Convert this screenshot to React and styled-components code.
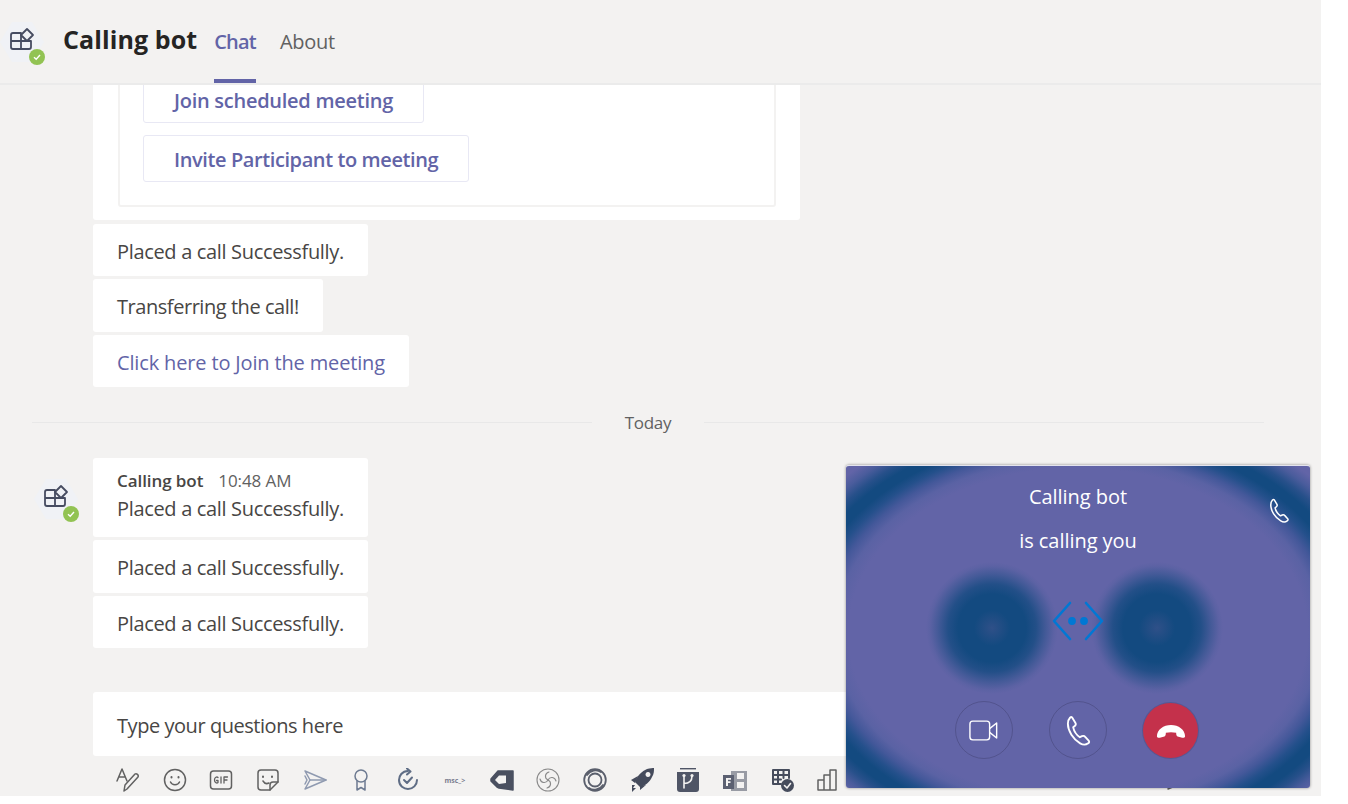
import React from 'react'
import styled, { createGlobalStyle } from 'styled-components'

const PURPLE = '#6264a7'
const TEXT = '#484644'
const FONT = '"Open Sans", "Noto Sans", sans-serif'
const SPOT = (x) => `radial-gradient(circle 66px at ${x}px 162px,
  rgba(47, 80, 136, 1) 0,
  rgba(19, 74, 128, 1) 18px,
  rgba(19, 74, 128, 1) 34px,
  rgba(19, 74, 128, 0.8) 44px,
  rgba(19, 74, 128, 0.38) 54px,
  rgba(19, 74, 128, 0.08) 62px,
  rgba(19, 74, 128, 0) 66px)`

const GlobalStyle = createGlobalStyle`
  html, body {
    margin: 0;
    padding: 0;
    background: #fff;
    font-family: ${FONT};
    overflow: hidden;
  }
`

const Page = styled.div`
  position: relative;
  width: 1321px;
  height: 796px;
  background: #f3f2f1;
  display: flex;
  flex-direction: column;
  overflow: hidden;
`

const Header = styled.header`
  flex: none;
  height: 83px;
  display: flex;
  align-items: stretch;
  border-bottom: 2px solid #ebebeb;
  box-sizing: content-box;
`

const HeaderAvatarSlot = styled.div`
  width: 63px;
  display: flex;
  align-items: center;
  box-sizing: border-box;
`

const Title = styled.h1`
  margin: 0 17px 0 0;
  font-size: 25px;
  font-weight: 700;
  letter-spacing: 0.1px;
  color: #252423;
  align-self: center;
  padding-bottom: 6px;
`

const Tab = styled.div`
  display: flex;
  align-items: center;
  margin-right: 24px;
  padding-top: 4px;
  font-size: 20px;
  letter-spacing: ${({ $active }) => ($active ? -0.8 : -0.3)}px;
  font-weight: ${({ $active }) => ($active ? 600 : 400)};
  color: ${({ $active }) => ($active ? PURPLE : '#616161')};
  border-bottom: 4px solid ${({ $active }) => ($active ? PURPLE : 'transparent')};
`

const AvatarRoot = styled.div`
  position: relative;
  width: 44px;
  height: 44px;
  flex: none;
`

const Badge = styled.div`
  position: absolute;
  right: -1px;
  bottom: -1px;
  width: 16px;
  height: 16px;
  border-radius: 50%;
  background: #92c353;
  display: flex;
  align-items: center;
  justify-content: center;
`

const Thread = styled.main`
  flex: 1;
  min-height: 0;
  display: flex;
  flex-direction: column;
  justify-content: flex-end;
  padding: 0 0 44px 93px;
  overflow: hidden;
`

const Bubble = styled.div`
  flex: none;
  align-self: flex-start;
  box-sizing: border-box;
  background: #fff;
  border-radius: 3px;
  padding: 14.25px 24px 10.25px;
  font-size: 20px;
  line-height: 28px;
  letter-spacing: ${({ $spacing }) => $spacing ?? -0.33}px;
  color: ${({ $link }) => ($link ? PURPLE : TEXT)};
  margin-top: ${({ $gap }) => $gap ?? 3}px;
`

const FirstBubble = styled(Bubble)`
  padding: 12px 24px 14px;
`

const CardBubble = styled(Bubble)`
  width: 707px;
  padding: 0 24px 13px 25px;
  margin-top: 0;
`

const InnerCard = styled.div`
  border: 2px solid #f3f2f1;
  border-radius: 3px;
  padding: 0 23px 23px;
  display: flex;
  flex-direction: column;
  align-items: flex-start;
  gap: 12px;
`

const ActionButton = styled.div`
  box-sizing: border-box;
  height: 47px;
  padding: 2px 30px 0;
  border: 1px solid #e8e8f4;
  border-radius: 3px;
  display: flex;
  align-items: center;
  font-size: 20px;
  font-weight: 600;
  letter-spacing: ${({ $spacing }) => $spacing}px;
  color: ${PURPLE};
`

const DateDivider = styled.div`
  flex: none;
  display: flex;
  align-items: center;
  gap: 33px;
  margin: 24px 57px 25px -61px;
  height: 22px;
  font-size: 17px;
  letter-spacing: -0.3px;
  color: #616161;
  &::before, &::after {
    content: '';
    flex: 1;
    height: 1px;
    background: #e8e8e8;
  }
`

const MessageRow = styled.div`
  flex: none;
  position: relative;
  display: flex;
  flex-direction: column;
`

const MessageAvatar = styled.div`
  position: absolute;
  left: -59px;
  top: 19px;
`

const Meta = styled.div`
  display: flex;
  gap: 15px;
  font-size: 17px;
  line-height: 22px;
  letter-spacing: -0.08px;
  color: #616161;
  margin-bottom: 3px;
`

const Author = styled.span`
  font-weight: 600;
  color: ${TEXT};
`

const Compose = styled.div`
  flex: none;
  height: 64px;
  margin: 0 56px 0 93px;
  background: #fff;
  border-radius: 3px;
  padding: 3px 24px 0;
  box-sizing: border-box;
  display: flex;
  align-items: center;
  font-size: 20px;
  letter-spacing: -0.45px;
  color: ${TEXT};
`

const Toolbar = styled.div`
  flex: none;
  height: 40px;
  margin: 0 56px 0 116px;
  display: flex;
  align-items: center;
  gap: 22.7px;
  padding-top: 8px;
  box-sizing: border-box;
  color: #616161;
`

const ToolIcon = styled.svg`
  width: 24px;
  height: 24px;
  flex: none;
  fill: none;
  stroke: currentColor;
  stroke-width: 1.5;
  stroke-linecap: round;
  stroke-linejoin: round;
`

const MscLabel = styled.span`
  width: 24px;
  flex: none;
  text-align: center;
  font-size: 7px;
  font-weight: 700;
  color: #7b7d90;
`

const SendSlot = styled.div`
  margin-left: auto;
  margin-right: 75px;
  line-height: 0;
`

const CallPopup = styled.aside`
  position: absolute;
  left: 846px;
  top: 465px;
  width: 464px;
  height: 323px;
  box-sizing: border-box;
  border-top: 1px solid #e4e4ee;
  border-radius: 3px;
  box-shadow: 0 0 3px rgba(0, 0, 0, 0.45);
  overflow: hidden;
  display: flex;
  flex-direction: column;
  align-items: center;
  color: #fff;
  background:
    ${SPOT(146)},
    ${SPOT(311)},
    radial-gradient(ellipse farthest-corner at 50% 52%,
      ${PURPLE} 70%, #5a62a4 74%, #44589a 77.5%, #24508b 81%, #134a80 84%,
      #134a80 87%, #27508a 90%, #4a5c9c 93.5%, ${PURPLE} 97%);
`

const CallText = styled.div`
  font-size: 20px;
  line-height: 28px;
  letter-spacing: -0.05px;
  margin-top: ${({ $top }) => $top}px;
`

const CornerPhone = styled.div`
  position: absolute;
  right: 18px;
  top: 31px;
  line-height: 0;
`

const BotMark = styled.div`
  margin-top: 46px;
  height: 40px;
  line-height: 0;
`

const CallActions = styled.div`
  margin: 60px 0 0 -3px;
  display: flex;
  align-items: center;
  gap: 36px;
`

const RoundButton = styled.div`
  width: 58px;
  height: 58px;
  box-sizing: border-box;
  border-radius: 50%;
  border: 1px solid rgba(70, 70, 120, 0.55);
  display: flex;
  align-items: center;
  justify-content: center;
`

const HangupButton = styled(RoundButton)`
  background: #c4314b;
  border: 0;
  width: 55px;
  height: 55px;
  box-shadow: 0 0 0 1px rgba(70, 70, 120, 0.4);
`

const PHONE_PATH = 'M7.5 2.5 L10 6.5 C10.6 7.5 10.3 8.4 9.6 9 L8.4 10 C9 12.8 11 15.8 13.4 17.4 L15 16.6 C15.9 16.2 16.8 16.4 17.4 17.2 L20 20 C20.6 20.8 20.4 21.6 19.6 22 C18 23.2 15.6 23.2 13.6 22 C8.4 19 4.4 12.6 4.4 7.4 C4.4 5.4 5 3.8 6 2.8 C6.5 2.3 7.1 2.1 7.5 2.5Z'

const Phone = ({ size }) => (
  <svg width={size} height={size} viewBox="0 0 24 24" fill="none" stroke="#fff" strokeWidth="1.4" strokeLinejoin="round">
    <path d={PHONE_PATH} />
  </svg>
)

const Avatar = () => (
  <AvatarRoot>
    <svg width="44" height="44" viewBox="0 0 44 44">
      <path d="M12 2 H32 L44 22 L32 42 H12 L0 22Z" fill="#f0f2f6" />
      <g fill="none" stroke="#464c61" strokeWidth="1.8" strokeLinejoin="round">
        <path d="M11 21 V15 a2 2 0 0 1 2 -2 H21 V29 H13 a2 2 0 0 1 -2 -2 V21 H31 V27 a2 2 0 0 1 -2 2 H21" />
        <path d="M21 15 L27 9 L33 15 L27 21Z" fill="#f0f2f6" />
      </g>
    </svg>
    <Badge>
      <svg width="8" height="8" viewBox="0 0 8 8" fill="none" stroke="#fff" strokeWidth="1.4">
        <path d="M1 4.2 L3.2 6.2 L7 2" />
      </svg>
    </Badge>
  </AvatarRoot>
)

const TOOLS = [
  <><path d="M1 13 L6 1 L11 13 M3 9 H9" /><path d="M8 23 L9 17 L19 6 C20.5 5 23 7 22 9 L11 21Z" /></>,
  <><circle cx="12" cy="12" r="10.5" /><path d="M7.5 14 C9 17.5 15 17.5 16.5 14" /><path d="M8.5 9 V9.5 M15.5 9 V9.5" strokeWidth="2" /></>,
  <><rect x="1.5" y="3" width="21" height="18" rx="3" /><path d="M9 9.5 C8 8.5 5.5 9 5.5 12 C5.5 15 8 15.5 9 14.5 V12.5 H7.5 M12 9 V15 M15 15 V9 H18.5 M15 12 H18" strokeWidth="1.3" /></>,
  <><path d="M14 22 H5 a3 3 0 0 1 -3 -3 V5 a3 3 0 0 1 3 -3 H19 a3 3 0 0 1 3 3 V14Z" /><path d="M14 22 V17 a3 3 0 0 1 3 -3 H22" /><path d="M7 8.5 V9 M16 8.5 V9" strokeWidth="2" /><path d="M7 13 C8.5 15.5 11 16 13 15" /></>,
  <g stroke="#8f9ab0"><path d="M2 3 L23 12 L2 21 L7 12Z" /><path d="M7 12 H23 M2 8 L4 12 L2 16" /></g>,
  <g stroke="#6d7a91"><circle cx="12" cy="8" r="6" /><path d="M8 13 V22 L12 19.5 L16 22 V13" /></g>,
  <g stroke="#5f6d85" strokeWidth="2"><path d="M12 3 C6 3 3 8 3 12 C3 18 8 21 12 21 C17 21 21 17 21 12" /><path d="M11 0.5 L14.5 3.5 L11 6.5" /><path d="M8 12 L11 15 L16 9.5" /></g>,
  null,
  <g fill="#4a5060" stroke="#4a5060"><path d="M1 11 L8 3 L23 3 V22 L9 20 L7 19 L1 13Z" /><path d="M5 12 L9 7.5 H16 V15 L9 16Z" fill="#f3f2f1" stroke="none" /></g>,
  <g stroke="#8a8a8a" strokeWidth="1.1"><circle cx="12" cy="12" r="11" /><path d="M12 12 C8 10 9 5 13 4 M12 12 C16 14 15 19 11 20 M12 12 C10 16 5 15 4 11 M12 12 C14 8 19 9 20 13" /></g>,
  <g stroke="#5a5f6c" strokeWidth="1.8"><circle cx="12" cy="12" r="10.8" /><circle cx="12" cy="12" r="6.5" /><path d="M4 7 C7 2 14 1 18 4 M20 17 C17 22 10 23 6 20" /></g>,
  <g stroke="none" fill="#454b5c"><path fillRule="evenodd" d="M5 14 C7 8 12 3 17 1 C20 0 23 0 24 0 C24 3 24 6 22 9 C20 14 15 18 10 19Z M18 4 a2.5 2.5 0 1 0 0.01 0Z" /><path d="M1 12 L8 8 L5 15Z M10 22 L16 17 L10 18Z" /><path d="M2 17 L5 17 L3 20 L6 20 L2 24Z" /></g>,
  <g stroke="none" fill="#4f5566"><rect x="4" y="0" width="16" height="1.4" /><path d="M1 4 H23 V21 a3 3 0 0 1 -3 3 H4 a3 3 0 0 1 -3 -3Z" /><path d="M8 8 V20 M8 15.5 C12 15.5 16 14 16 8" stroke="#f3f2f1" strokeWidth="1.6" fill="none" /><circle cx="8" cy="7.5" r="1.6" fill="#f3f2f1" /><circle cx="16" cy="7.5" r="1.6" fill="#f3f2f1" /></g>,
  <g stroke="none" fill="#5b6071"><path d="M0 7 H11 V21 H0Z" /><path d="M8 3 H24 V23 H8Z" fillOpacity="0.6" /><rect x="14" y="5" width="7" height="6" fill="#f3f2f1" /><rect x="14" y="14" width="7" height="6" fill="#f3f2f1" /><path d="M3 10 H8 V11.8 H5 V13.2 H7.5 V15 H5 V18 H3Z" fill="#f3f2f1" /></g>,
  <g><path d="M11 16 H3 V2 H19 V10 M3 7 H19 M3 11.5 H11 M8 2 V15 M13.5 2 V10" stroke="#464c5c" strokeWidth="2" /><circle cx="17.5" cy="17.5" r="6.5" fill="#464c5c" stroke="none" /><path d="M14.5 17.5 L17 20 L20.5 15.5" stroke="#f3f2f1" strokeWidth="1.6" /></g>,
  <><path d="M2 22 V12 H8 V22Z M8 22 V7 H14 V22 M14 22 V2 H20 V22Z M2 22 H20" /></>,
]

const App = () => (
  <>
    <GlobalStyle />
    <Page>
      <Header>
        <HeaderAvatarSlot><Avatar /></HeaderAvatarSlot>
        <Title>Calling bot</Title>
        <Tab $active>Chat</Tab>
        <Tab>About</Tab>
      </Header>
      <Thread>
        <CardBubble>
          <InnerCard>
            <ActionButton $spacing={-0.27}>Join scheduled meeting</ActionButton>
            <ActionButton $spacing={-0.4}>Invite Participant to meeting</ActionButton>
          </InnerCard>
        </CardBubble>
        <Bubble $gap={3.5}>Placed a call Successfully.</Bubble>
        <Bubble $spacing={-0.45}>Transferring the call!</Bubble>
        <Bubble $link $spacing={-0.15}>Click here to Join the meeting</Bubble>
        <DateDivider>Today</DateDivider>
        <MessageRow>
          <MessageAvatar><Avatar /></MessageAvatar>
          <FirstBubble $gap={0}>
            <Meta><Author>Calling bot</Author><span>10:48 AM</span></Meta>
            Placed a call Successfully.
          </FirstBubble>
        </MessageRow>
        <Bubble>Placed a call Successfully.</Bubble>
        <Bubble>Placed a call Successfully.</Bubble>
      </Thread>
      <Compose>Type your questions here</Compose>
      <Toolbar>
        {TOOLS.map((tool, i) => (tool
          ? <ToolIcon key={i} viewBox="0 0 24 24">{tool}</ToolIcon>
          : <MscLabel key={i}>msc_&gt;</MscLabel>))}
        <SendSlot>
          <ToolIcon viewBox="0 0 24 24"><path d="M2 3 L23 12 L2 21 L6 12Z" /></ToolIcon>
        </SendSlot>
      </Toolbar>
      <CallPopup>
        <CallText $top={17}>Calling bot</CallText>
        <CallText $top={16}>is calling you</CallText>
        <CornerPhone><Phone size={26} /></CornerPhone>
        <BotMark>
          <svg width="52" height="40" viewBox="0 0 52 40" fill="none" stroke="#0078d4" strokeWidth="2.6" strokeLinecap="round" strokeLinejoin="round">
            <path d="M18 2 L2 20 L18 38 M34 2 L50 20 L34 38" />
            <circle cx="20" cy="20" r="2.6" fill="#0078d4" />
            <circle cx="32" cy="20" r="2.6" fill="#0078d4" />
          </svg>
        </BotMark>
        <CallActions>
          <RoundButton>
            <svg width="30" height="23" viewBox="0 0 32 24" fill="none" stroke="#fff" strokeWidth="1.5" strokeLinejoin="round">
              <rect x="1" y="2" width="21" height="20" rx="3" />
              <path d="M22 10 L29.5 4 V20 L22 14" />
            </svg>
          </RoundButton>
          <RoundButton><Phone size={32} /></RoundButton>
          <HangupButton>
            <svg width="30" height="15" viewBox="0 0 32 16" fill="#fff">
              <path d="M1 14 C1 7 8 2 16 2 C24 2 31 7 31 14 C31 15.5 29 16 27 15.5 L23 14.5 C22 14 21.5 13 21.5 10.5 C18 9.5 14 9.5 10.5 10.5 C10.5 13 10 14 9 14.5 L5 15.5 C3 16 1 15.5 1 14Z" />
            </svg>
          </HangupButton>
        </CallActions>
      </CallPopup>
    </Page>
  </>
)

export default App
